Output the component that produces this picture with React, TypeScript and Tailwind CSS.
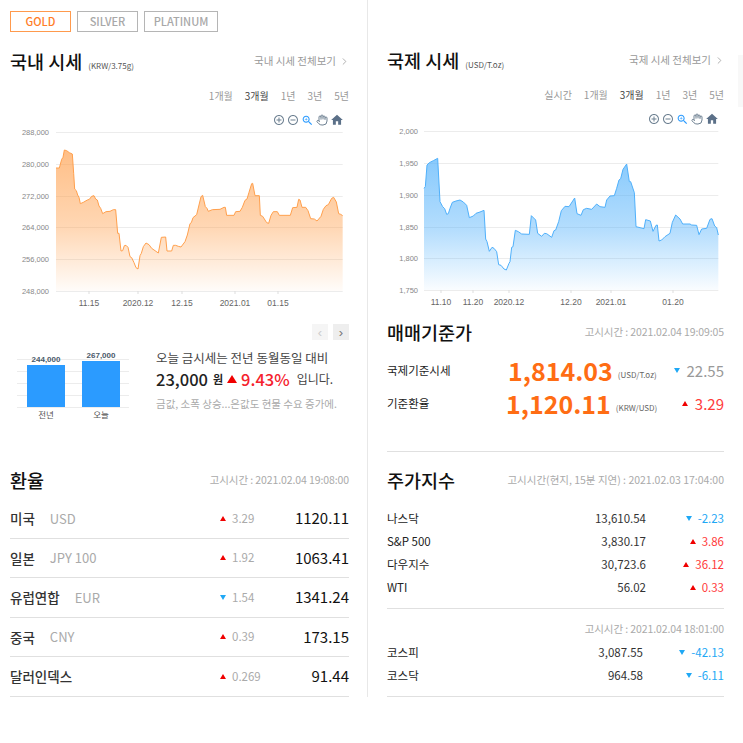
import { ChevronRight, Hand } from "lucide-react"

const FONT = "font-['Noto_Sans_CJK_KR','Noto_Sans',sans-serif]"

const goldLine = "168,144 178,144 185,118 189,112 193,90 200,92 208,98 217,102 221,160 224,207 229,212 233,225 237,232 241,251 250,247 262,240 268,238 275,229 282,227 287,237 292,240 297,258 302,265 308,281 318,275 330,274 340,269 347,269 353,340 357,340 363,393 368,392 373,377 378,376 384,382 390,410 395,413 402,428 408,443 414,447 420,407 424,400 430,380 438,369 447,374 455,385 465,392 475,399 484,352 497,351 501,393 515,393 520,376 527,376 535,379 543,381 555,365 562,345 570,311 574,308 579,293 590,284 603,230 608,226 616,260 621,265 625,274 637,269 660,268 672,262 676,262 680,286 702,286 707,275 720,274 727,262 735,241 741,237 747,217 755,191 758,190 765,227 778,227 781,286 788,289 800,308 806,310 813,286 820,275 832,275 838,286 871,286 878,263 891,262 896,238 900,240 906,262 917,262 924,272 932,296 943,297 951,303 963,289 970,268 978,257 985,254 995,235 1001,232 1009,246 1016,281 1022,283 1028,287"

const worldLine = "162,205 166,200 171,135 178,128 190,122 203,115 210,245 218,260 224,266 230,283 235,281 240,265 247,247 258,243 270,240 280,246 290,256 298,293 310,288 318,280 330,276 342,271 347,357 351,365 358,394 366,382 372,385 380,395 386,434 393,436 402,447 409,450 417,430 420,425 425,382 429,380 436,331 445,335 455,342 478,343 484,287 497,300 503,340 515,349 523,340 530,341 545,352 552,332 557,330 566,305 574,272 585,259 597,260 614,234 621,281 633,286 640,269 650,265 665,268 680,252 690,260 705,262 710,240 720,228 733,227 740,205 747,180 752,176 759,148 770,132 778,185 782,185 793,218 798,320 822,326 827,299 841,303 849,334 858,316 862,315 867,363 875,360 885,350 900,340 907,307 917,285 930,297 938,312 960,312 965,315 980,316 987,344 995,327 1010,325 1020,298 1026,296 1034,318 1040,323 1045,345"

function toPage(line: string, offsetX: number) {
  return line.split(" ").map(p => {
    const [x, y] = p.split(",").map(Number)
    return [offsetX + x / 3, 120 + y / 3]
  })
}

function AreaChart({ id, line, offsetX, color, left, right, top, height, labelX, grid, labels, ticks }: {
  id: string, line: string, offsetX: number, color: string, left: number, right: number, top: number, height: number, labelX: number,
  grid: number[], labels: string[], ticks: { x: number, label: string }[]
}) {
  const pts = toPage(line, offsetX)
  const first = pts[0]
  const last = pts[pts.length - 1]
  const bottom = grid[grid.length - 1]
  const linePts = pts.map(p => p.join(",")).join(" ")
  const area = `${first[0]},${bottom} ${linePts} ${last[0]},${bottom}`
  return (
    <svg className="block" width={right - left} height={height} viewBox={`${left} ${top} ${right - left} ${height}`}>
      <defs>
        <linearGradient id={id} x1="0" y1="0" x2="0" y2="1">
          <stop offset="0" stopColor={color} stopOpacity="0.68" />
          <stop offset="0.55" stopColor={color} stopOpacity="0.42" />
          <stop offset="1" stopColor={color} stopOpacity="0.03" />
        </linearGradient>
      </defs>
      {grid.map(y => <line key={y} x1={first[0]} x2={last[0]} y1={y + 0.5} y2={y + 0.5} stroke="#ececec" />)}
      {labels.map((l, i) => (
        <text key={l} x={labelX} y={grid[i] + 3} textAnchor="end" fontSize="7.5" fill="#888" fontFamily="Liberation Sans">{l}</text>
      ))}
      <polygon points={area} fill={`url(#${id})`} />
      <polyline points={linePts} fill="none" stroke={color} strokeWidth="1" />
      {ticks.map(t => (
        <g key={t.label}>
          <line x1={t.x} x2={t.x} y1={bottom} y2={bottom + 3} stroke="#ddd" />
          <text x={t.x} y={bottom + 15} textAnchor="middle" fontSize="8.5" fill="#666" fontFamily="Liberation Sans">{t.label}</text>
        </g>
      ))}
    </svg>
  )
}

function Toolbar() {
  return (
    <div className="flex h-[14px] items-center justify-end gap-[2px]">
      <svg width="12" height="12" viewBox="0 0 24 24" fill="#6e8192"><path d="M13 7h-2v4H7v2h4v4h2v-4h4v-2h-4V7zm-1-5C6.48 2 2 6.48 2 12s4.48 10 10 10 10-4.48 10-10S17.52 2 12 2zm0 18c-4.41 0-8-3.59-8-8s3.59-8 8-8 8 3.59 8 8-3.59 8-8 8z" /></svg>
      <svg width="12" height="12" viewBox="0 0 24 24" fill="#6e8192"><path d="M7 11v2h10v-2H7zm5-9C6.48 2 2 6.48 2 12s4.48 10 10 10 10-4.48 10-10S17.52 2 12 2zm0 18c-4.41 0-8-3.59-8-8s3.59-8 8-8 8 3.59 8 8-3.59 8-8 8z" /></svg>
      <svg width="13" height="13" viewBox="0 0 24 24" fill="#2b9bff"><path d="M15.5 14h-.79l-.28-.27C15.41 12.59 16 11.11 16 9.5 16 5.91 13.09 3 9.5 3S3 5.91 3 9.5 5.91 16 9.5 16c1.61 0 3.09-.59 4.23-1.57l.27.28v.79l5 4.99L20.49 19l-4.99-5zm-6 0C7.01 14 5 11.99 5 9.5S7.01 5 9.5 5 14 7.01 14 9.5 11.99 14 9.5 14z" /><path d="M12 10h-2v2H9v-2H7V9h2V7h1v2h2v1z" /></svg>
      <Hand size={12} color="#6e8192" strokeWidth={2} />
      <svg width="14" height="14" viewBox="0 0 24 24" fill="#5b7088"><path d="M10 20v-6h4v6h5v-8h3L12 3 2 12h3v8z" /></svg>
    </div>
  )
}

function Periods({ items }: { items: string[] }) {
  return (
    <div className="flex h-[14px] items-center justify-end gap-3 text-[10px] leading-none text-[#999]">
      {items.map(p => <span key={p} className={p === "3개월" ? "text-[#444]" : ""}>{p}</span>)}
    </div>
  )
}

function Up({ className = "" }: { className?: string }) {
  return <span className={"inline-block h-0 w-0 border-x-[3px] border-b-[5px] border-x-transparent border-b-[#f00000] " + className} />
}

function Down({ className = "" }: { className?: string }) {
  return <span className={"inline-block h-0 w-0 border-x-[3px] border-t-[5px] border-x-transparent border-t-[#1fa8f5] " + className} />
}

function SectionHead({ title, unit, link, time, timeClass = "tracking-[-0.1px]" }: { title: string, unit?: string, link?: string, time?: string, timeClass?: string }) {
  return (
    <div className="flex h-[22px] items-center justify-between">
      <div className="flex items-baseline">
        <h2 className="text-[18.5px] leading-[22px] font-medium text-[#111]">{title}</h2>
        {unit && <span className="ml-[6px] text-[8px] text-[#555]">{unit}</span>}
      </div>
      {link && (
        <span className="flex items-center text-[10.5px] text-[#999]">
          {link}
          <ChevronRight size={11} className="ml-[3px] -mr-[1px]" color="#aaa" />
        </span>
      )}
      {time && <span className={"text-[10.5px] text-[#aaa] " + timeClass}>{time}</span>}
    </div>
  )
}

const rates = [
  { name: "미국", code: "USD", up: true, diff: "3.29", value: "1120.11" },
  { name: "일본", code: "JPY 100", up: true, diff: "1.92", value: "1063.41" },
  { name: "유럽연합", code: "EUR", up: false, diff: "1.54", value: "1341.24" },
  { name: "중국", code: "CNY", up: true, diff: "0.39", value: "173.15" },
  { name: "달러인덱스", code: "", up: true, diff: "0.269", value: "91.44" },
]

const overseas = [
  { name: "나스닥", value: "13,610.54", diff: "-2.23", up: false },
  { name: "S&P 500", value: "3,830.17", diff: "3.86", up: true },
  { name: "다우지수", value: "30,723.6", diff: "36.12", up: true },
  { name: "WTI", value: "56.02", diff: "0.33", up: true },
]

const korea = [
  { name: "코스피", value: "3,087.55", diff: "-42.13", up: false },
  { name: "코스닥", value: "964.58", diff: "-6.11", up: false },
]

function IndexRow({ row, valueRight }: { row: { name: string, value: string, diff: string, up: boolean }, valueRight: string }) {
  return (
    <div className="flex h-[23px] items-center text-[11.5px] text-[#333]">
      <span className="text-[#222]">{row.name}</span>
      <span className={"ml-auto " + valueRight}>{row.value}</span>
      <span className={"flex w-[78px] items-center justify-end gap-[6px] " + (row.up ? "text-[#ff3b3b]" : "text-[#1fa8f5]")}>
        {row.up ? <Up /> : <Down />}{row.diff}
      </span>
    </div>
  )
}

export default function App() {
  return (
    <div className={"relative flex h-[743px] w-[743px] overflow-hidden bg-white " + FONT}>
      <div className="h-[697px] w-[368px] border-r border-[#e8e8e8] pt-[11px] pr-[18px] pl-[10px]">
        <div className="flex gap-[6px] text-[11px] leading-[19px] font-medium">
          <button className="h-[21px] w-[61px] border border-[#ff9a4d] text-[#ff7d26]">GOLD</button>
          <button className="h-[21px] w-[61px] border border-[#b5b5b5] text-[#a8a8a8]">SILVER</button>
          <button className="h-[21px] w-[74px] border border-[#b5b5b5] text-[#a8a8a8]">PLATINUM</button>
        </div>
        <div className="mt-[18px]"><SectionHead title="국내 시세" unit="(KRW/3.75g)" link="국내 시세 전체보기" /></div>
        <div className="mt-[17px]"><Periods items={["1개월", "3개월", "1년", "3년", "5년"]} /></div>
        <div className="mt-[10px] pr-[5px]"><Toolbar /></div>
        <AreaChart
          id="gold" line={goldLine} offsetX={0} color="#ffa04d"
          left={10} right={349} top={127} height={190} labelX={49}
          grid={[132, 164, 196, 227, 259, 291]}
          labels={["288,000", "280,000", "272,000", "264,000", "256,000", "248,000"]}
          ticks={[{ x: 89, label: "11.15" }, { x: 138, label: "2020.12" }, { x: 182, label: "12.15" }, { x: 235, label: "2021.01" }, { x: 278, label: "01.15" }]}
        />
        <div className="mt-[7px] flex justify-end gap-[5px]">
          <span className="flex h-4 w-4 items-center justify-center bg-[#f5f5f5] font-['Liberation_Sans'] text-[13px] leading-none text-[#ccc]">‹</span>
          <span className="flex h-4 w-4 items-center justify-center bg-[#eeeeee] font-['Liberation_Sans'] text-[13px] leading-none text-[#777]">›</span>
        </div>
        <div className="mt-[8px] flex h-[80px]">
          <svg className="block shrink-0" width="146" height="80" viewBox="10 348 146 80">
            {[359, 371, 383, 395, 407].map(y => <line key={y} x1="17" x2="129" y1={y + 0.5} y2={y + 0.5} stroke="#ececec" />)}
            <rect x="27" y="365" width="38" height="42" fill="#2b9bff" />
            <rect x="82" y="361" width="38" height="46" fill="#2b9bff" />
            <text x="46" y="362" textAnchor="middle" fontSize="8" fontWeight="700" fill="#4a5a6a" fontFamily="Liberation Sans">244,000</text>
            <text x="101" y="358" textAnchor="middle" fontSize="8" fontWeight="700" fill="#4a5a6a" fontFamily="Liberation Sans">267,000</text>
            <text x="46" y="418" textAnchor="middle" fontSize="8.5" fill="#555">전년</text>
            <text x="101" y="418" textAnchor="middle" fontSize="8.5" fill="#555">오늘</text>
          </svg>
          <div>
            <p className="mt-[2px] text-[12.5px] leading-[16px] text-[#444]">오늘 금시세는 전년 동월동일 대비</p>
            <p className="mt-[2px] flex h-[22px] items-center text-[#222]">
              <span className="text-[16.5px] font-medium">23,000</span>
              <span className="ml-[5px] text-[11px] font-bold">원</span>
              <Up className="mx-[4px] border-x-[5px]! border-b-[8px]!" />
              <span className="text-[16.5px] font-medium text-[#f5222d]">9.43%</span>
              <span className="ml-[7px] text-[12px] text-[#444]">입니다.</span>
            </p>
            <p className="mt-[7px] text-[10.5px] leading-[14px] text-[#aaa]">금값, 소폭 상승...은값도 현물 수요 증가에.</p>
          </div>
        </div>
        <div className="mt-[41px]"><SectionHead title="환율" time="고시시간 : 2021.02.04 19:08:00" /></div>
        <div className="mt-[8px]">
          {rates.map(r => (
            <div key={r.name} className="flex h-[39.5px] items-center border-b border-[#e0e0e0]">
              <span className="text-[13.5px] font-medium whitespace-nowrap text-[#333]">{r.name}</span>
              <span className="ml-[15px] text-[13px] text-[#aaa]">{r.code}</span>
              <span className="ml-auto flex w-[69px] items-center gap-[6px] text-[11.5px] text-[#aaa]">
                {r.up ? <Up /> : <Down />}{r.diff}
              </span>
              <span className="w-[60px] text-right text-[15px] text-[#111]">{r.value}</span>
            </div>
          ))}
        </div>
      </div>

      <div className="h-[697px] flex-1 pt-[49px] pr-[19px] pl-[19px]">
        <SectionHead title="국제 시세" unit="(USD/T.oz)" link="국제 시세 전체보기" />
        <div className="mt-[17px]"><Periods items={["실시간", "1개월", "3개월", "1년", "3년", "5년"]} /></div>
        <div className="mt-[10px] pr-[5px]"><Toolbar /></div>
        <AreaChart
          id="world" line={worldLine} offsetX={370} color="#4fb0fb"
          left={387} right={724} top={126} height={195} labelX={418}
          grid={[131, 163, 195, 227, 258, 290]}
          labels={["2,000", "1,950", "1,900", "1,850", "1,800", "1,750"]}
          ticks={[{ x: 441, label: "11.10" }, { x: 473, label: "11.20" }, { x: 509, label: "2020.12" }, { x: 571, label: "12.20" }, { x: 611, label: "2021.01" }, { x: 673, label: "01.20" }]}
        />
        <SectionHead title="매매기준가" time="고시시간 : 2021.02.04 19:09:05" />
        <div className="mt-[11px]">
          <div className="flex h-[33px] items-center">
            <span className="w-[121px] text-[11.5px] text-[#222]">국제기준시세</span>
            <span className="text-[25px] leading-none font-semibold text-[#ff6d14]">1,814.03</span>
            <span className="mt-[8px] ml-[5px] text-[8px] leading-none text-[#666]">(USD/T.oz)</span>
            <span className="ml-auto flex items-center gap-[7px] text-[15px] leading-none text-[#999]"><Down />22.55</span>
          </div>
          <div className="flex h-[33px] items-center">
            <span className="w-[119px] text-[11.5px] text-[#222]">기준환율</span>
            <span className="text-[25px] leading-none font-semibold text-[#ff6d14]">1,120.11</span>
            <span className="mt-[8px] ml-[5px] text-[8px] leading-none text-[#666]">(KRW/USD)</span>
            <span className="ml-auto flex items-center gap-[7px] text-[15px] leading-none text-[#ff3b3b]"><Up />3.29</span>
          </div>
        </div>
        <div className="mt-[31px] border-t border-[#e0e0e0] pt-[17px]">
          <SectionHead title="주가지수" time="고시시간(현지, 15분 지연) : 2021.02.03 17:04:00" timeClass="tracking-normal" />
        </div>
        <div className="mt-[16px]">
          {overseas.map(r => <IndexRow key={r.name} row={r} valueRight="" />)}
        </div>
        <div className="mt-[9px] border-t border-[#e0e0e0] pt-[13px] text-right text-[10.5px] leading-[14px] tracking-[-0.1px] text-[#aaa]">고시시간 : 2021.02.04 18:01:00</div>
        <div className="mt-[5px] border-b border-[#e0e0e0] pb-[9px]">
          {korea.map(r => <IndexRow key={r.name} row={r} valueRight="mr-[3px]" />)}
        </div>
      </div>

      <div className="absolute top-[55px] right-0 h-[52px] w-[5px] bg-[#f8f8f8]" />
    </div>
  )
}
